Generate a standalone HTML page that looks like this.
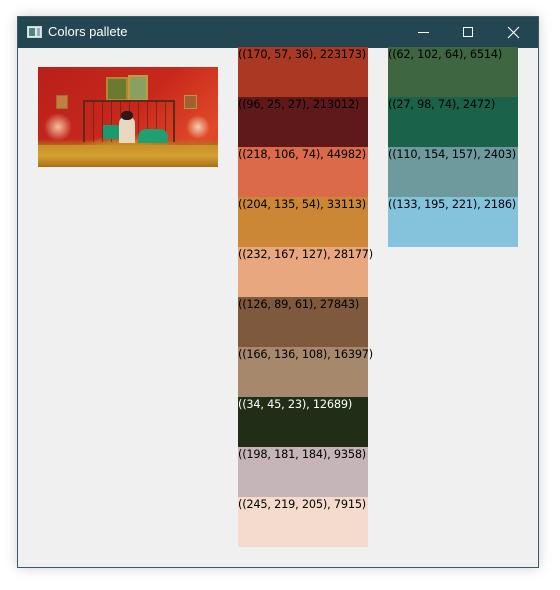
<!DOCTYPE html>
<html><head><meta charset="utf-8"><style>
html,body{margin:0;padding:0;width:560px;height:590px;background:#fff;overflow:hidden;font-family:Tahoma,"DejaVu Sans","Liberation Sans",sans-serif}
.win{position:absolute;left:17px;top:16px;width:520px;height:550px;border:1px solid #3a5a66;background:#f0f0f0;box-shadow:0 0 12px rgba(0,0,0,.18)}
.tb{position:absolute;left:0;top:0;width:520px;height:31px;background:#244652;color:#fff}
.tb .t{position:absolute;left:30px;top:7px;font-family:"Segoe UI","Liberation Sans",sans-serif;font-size:13px}
.sw{position:absolute;width:130px;height:49px;padding-top:1px;font-size:11.3px;line-height:14px;color:#000;white-space:nowrap;letter-spacing:-0.2px}
.img{position:absolute;left:20px;top:50px;width:180px;height:100px;overflow:hidden;
background:
radial-gradient(ellipse 60px 25px at 90px 92px,#d9a23a 0,#c78a22 60%,transparent 100%),
linear-gradient(to bottom,transparent 0,transparent 72%,#b07a20 80%,#d8a030 100%),
radial-gradient(circle at 20px 60px,#f5c0a0 0,transparent 14px),
radial-gradient(circle at 160px 60px,#f5d0b0 0,transparent 12px),
linear-gradient(135deg,#b8201a 0,#c8281c 50%,#e04a28 85%,#d83a22 100%)}
</style></head><body>
<div class="win">
 <div class="tb">
  <svg style="position:absolute;left:9px;top:9px" width="15" height="12"><rect x="0.5" y="0.5" width="14" height="11" fill="#dfe8ee" stroke="#cfd8dd"/><rect x="2" y="2" width="6" height="8" fill="#4c8a7a"/><rect x="10" y="2" width="3" height="8" fill="#9ab"/></svg>
  <span class="t">Colors pallete</span>
  <svg style="position:absolute;left:400px;top:9px" width="110" height="14">
   <line x1="0" y1="6.5" x2="11" y2="6.5" stroke="#fff" stroke-width="1"/>
   <rect x="45.5" y="1.5" width="9" height="9" fill="none" stroke="#fff"/>
   <path d="M90 1 L101 12 M101 1 L90 12" stroke="#fff" stroke-width="1.1"/>
  </svg>
 </div>
 <div class="img">
  <div style="position:absolute;left:68px;top:10px;width:18px;height:20px;background:#6a7a30;border:2px solid #b08a30"></div>
  <div style="position:absolute;left:90px;top:8px;width:16px;height:22px;background:#8aa060;border:2px solid #c09a40"></div>
  <div style="position:absolute;left:18px;top:28px;width:10px;height:12px;background:#c08040;border:1px solid #a07030"></div>
  <div style="position:absolute;left:146px;top:28px;width:11px;height:12px;background:#a06030;border:1px solid #c09040"></div>
  <div style="position:absolute;left:45px;top:33px;width:88px;height:40px;border:2px solid #5a2a1a;border-bottom:none;background:repeating-linear-gradient(90deg,transparent 0 8px,rgba(80,30,20,.6) 8px 9px)"></div>
  <div style="position:absolute;left:65px;top:58px;width:22px;height:14px;background:#1a9a70"></div>
  <div style="position:absolute;left:100px;top:62px;width:30px;height:14px;background:#20a070;border-radius:8px 8px 0 0"></div>
  <div style="position:absolute;left:81px;top:50px;width:16px;height:26px;background:#e8d8c0;border-radius:6px 6px 0 0"></div>
  <div style="position:absolute;left:83px;top:44px;width:12px;height:9px;background:#2a1a1a;border-radius:6px"></div>
  <div style="position:absolute;left:0;top:78px;width:180px;height:22px;background:linear-gradient(#c89028,#d4a030 50%,#a87018)"></div>
 </div>

 <div class="sw" style="left:220px;top:30px;background:rgb(170,57,36)">((170, 57, 36), 223173)</div>
 <div class="sw" style="left:220px;top:80px;background:rgb(96,25,27)">((96, 25, 27), 213012)</div>
 <div class="sw" style="left:220px;top:130px;background:rgb(218,106,74)">((218, 106, 74), 44982)</div>
 <div class="sw" style="left:220px;top:180px;background:rgb(204,135,54)">((204, 135, 54), 33113)</div>
 <div class="sw" style="left:220px;top:230px;background:rgb(232,167,127)">((232, 167, 127), 28177)</div>
 <div class="sw" style="left:220px;top:280px;background:rgb(126,89,61)">((126, 89, 61), 27843)</div>
 <div class="sw" style="left:220px;top:330px;background:rgb(166,136,108)">((166, 136, 108), 16397)</div>
 <div class="sw" style="left:220px;top:380px;background:rgb(34,45,23);color:#fff">((34, 45, 23), 12689)</div>
 <div class="sw" style="left:220px;top:430px;background:rgb(198,181,184)">((198, 181, 184), 9358)</div>
 <div class="sw" style="left:220px;top:480px;background:rgb(245,219,205)">((245, 219, 205), 7915)</div>

 <div class="sw" style="left:370px;top:30px;background:rgb(62,102,64)">((62, 102, 64), 6514)</div>
 <div class="sw" style="left:370px;top:80px;background:rgb(27,98,74)">((27, 98, 74), 2472)</div>
 <div class="sw" style="left:370px;top:130px;background:rgb(110,154,157)">((110, 154, 157), 2403)</div>
 <div class="sw" style="left:370px;top:180px;background:rgb(133,195,221)">((133, 195, 221), 2186)</div>
</div>
</body></html>
